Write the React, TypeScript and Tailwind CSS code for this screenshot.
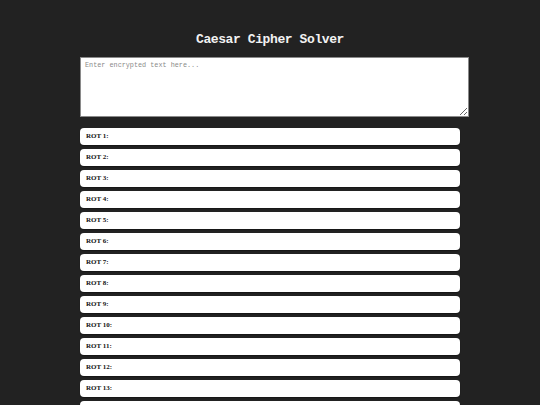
import React from 'react';

const shifts = Array.from({ length: 25 }, (_, i) => i + 1);

export default function App() {
  return (
    <div className="min-h-screen bg-[#222222] pt-[31px] pb-6">
      <div className="mx-auto flex w-[380px] flex-col">
        <h1 className="text-center font-['Liberation_Mono',monospace] text-[13px] font-bold leading-[18px] tracking-[-0.4px] text-[#f2f2f2]">
          Caesar Cipher Solver
        </h1>
        <textarea
          className="mt-[8px] block h-[60px] w-[389px] resize-y border border-[#8a8a8a] bg-white px-[4px] py-[3px] font-['Liberation_Mono',monospace] text-[6.8px] leading-[9px] text-[#333] placeholder:text-[#8a8a8a] outline-none"
          placeholder="Enter encrypted text here..."
        />
        <div className="mt-[11px] flex flex-col gap-[4px]">
          {shifts.map((n) => (
            <div
              key={n}
              className="flex h-[17px] items-center rounded-[4px] bg-white px-[6px] shadow-[0_1px_1px_rgba(0,0,0,0.35)]"
            >
              <span className="font-['Liberation_Serif',serif] text-[7px] font-bold text-[#111]">
                ROT {n}:
              </span>
            </div>
          ))}
        </div>
      </div>
    </div>
  );
}
